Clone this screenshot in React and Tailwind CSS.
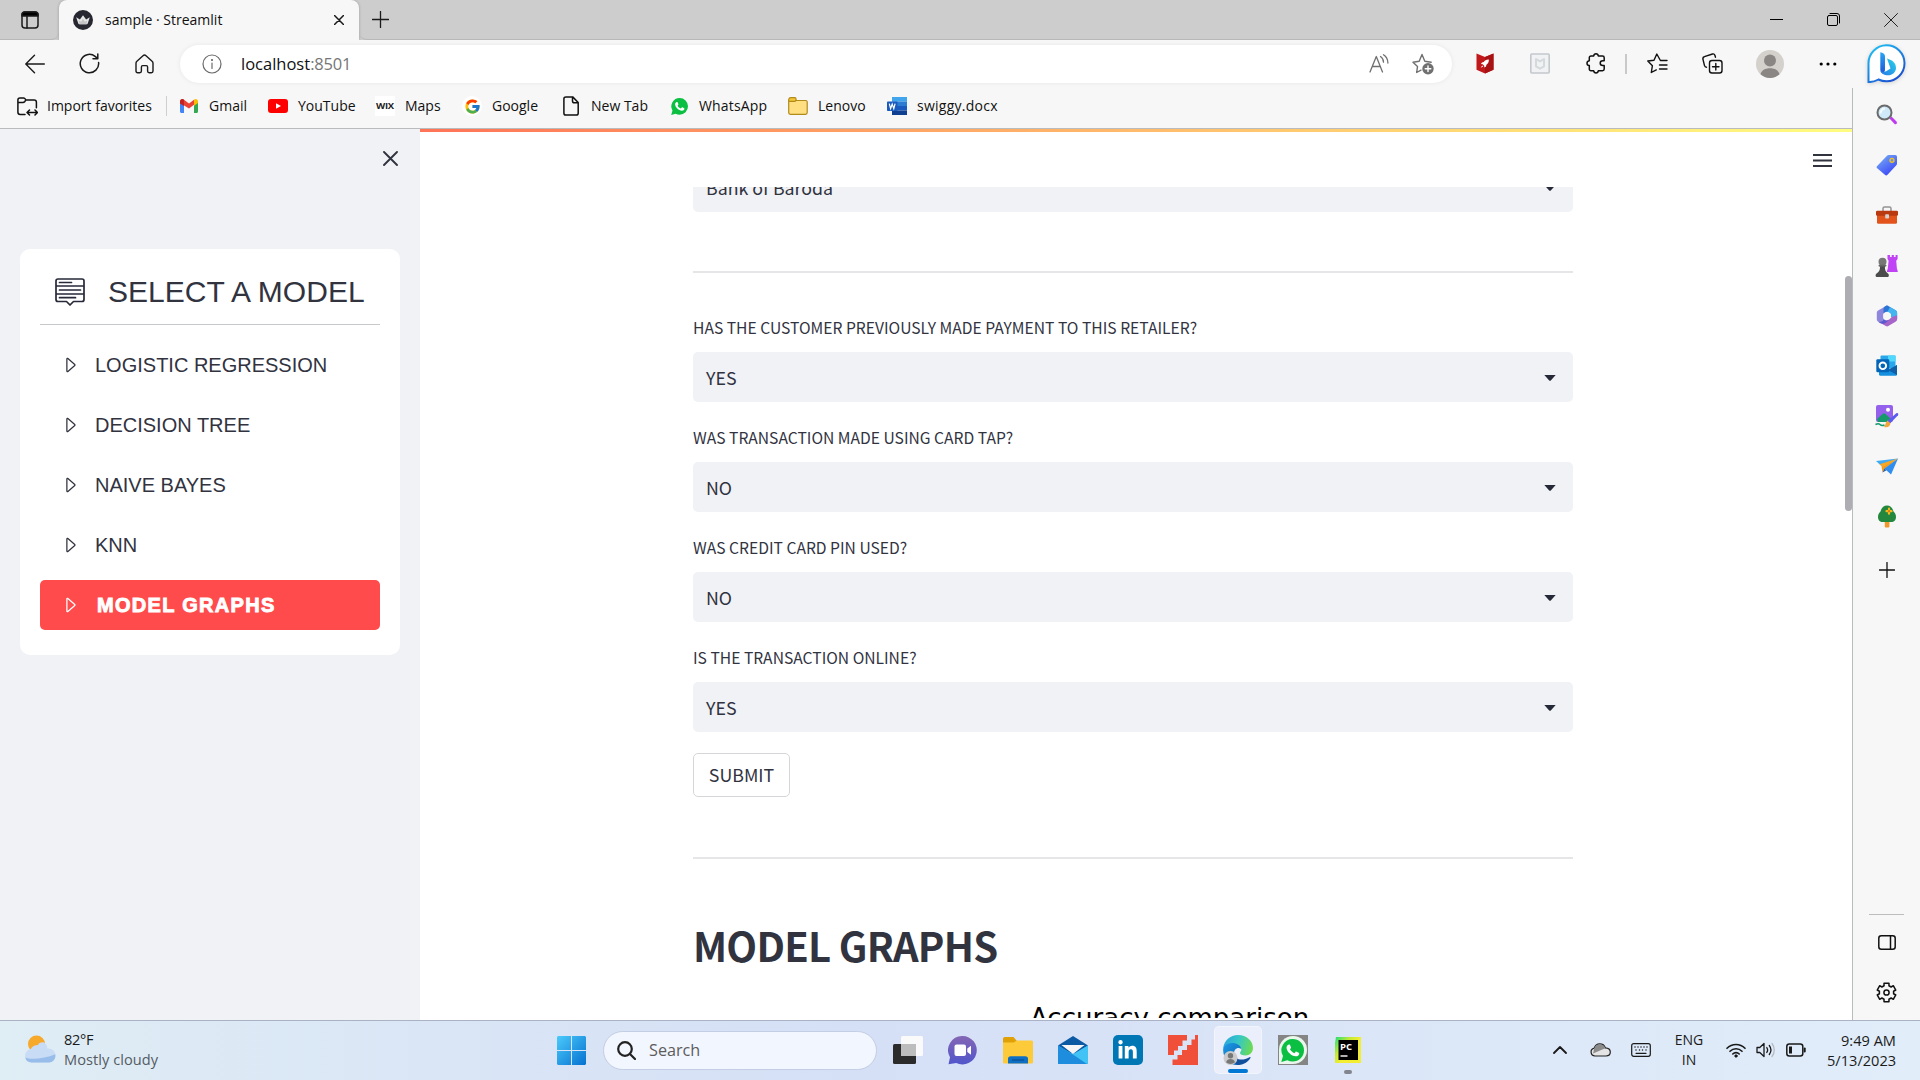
import React from "react";
import { BsCaretRight } from "react-icons/bs";
import { FcGoogle } from "react-icons/fc";
import { FaLinkedinIn } from "react-icons/fa";

const stroke = {
  fill: "none",
  stroke: "#1a1a1a",
  strokeWidth: 1.4,
  strokeLinecap: "round",
  strokeLinejoin: "round",
};

function Icon({ w = 20, h, box, className = "", children, ...rest }) {
  const height = h || w;
  return (
    <svg width={w} height={height} viewBox={box || `0 0 ${w} ${height}`} className={`block shrink-0 ${className}`} {...rest}>
      {children}
    </svg>
  );
}

/* ---------- browser tab strip ---------- */

function TabStrip() {
  return (
    <div className="flex h-10 bg-[#cdcdcd]">
      <div className="flex w-[59px] shrink-0 items-center rounded-br-lg border-b border-[#b8b8b8] pl-[21px]">
        <Icon w={18} {...stroke} strokeWidth={1.5}>
          <rect x="1" y="1" width="16" height="16" rx="3" />
          <path d="M1 5V3.5A2.5 2.5 0 0 1 3.500 1h11A2.500 2.500 0 0 1 17 3.500V5z" fill="#000" />
          <path d="M6 5v12" />
        </Icon>
      </div>
      <div className="flex h-10 w-[300px] shrink-0 items-center rounded-t-lg bg-[#f7f7f7] pl-[14px] shadow-[0_0_3px_rgba(0,0,0,0.25)]">
        <Icon w={20}>
          <circle cx="10" cy="10" r="10" fill="#262730" />
          <path d="M3.200 7.300l3.700 2.200L10 5.200l3.100 4.300 3.700-2.200-2 6c-.2.600-.5.900-1.100.900H6.300c-.6 0-.9-.3-1.100-.9z" fill="#e6e6e6" />
          <path d="M5.600 10.500l2.500 1.200 1.900-3 1.900 3 2.500-1.200-1 3.700H6.600z" fill="#c4c4c6" />
        </Icon>
        <span className="ml-[12px] w-[229px] text-[14px] leading-5 text-[#111]">sample · Streamlit</span>
        <Icon w={10} {...stroke} strokeWidth={1.5}>
          <path d="M.5.500l9 9M9.500.500l-9 9" />
        </Icon>
      </div>
      <div className="flex flex-1 items-center rounded-bl-lg border-b border-[#b8b8b8] pl-[13px]">
        <Icon w={17} {...stroke} strokeWidth={1.3}>
          <path d="M8.500.500v16M.5 8.500h16" />
        </Icon>
        <div className="flex-1" />
        <Icon w={13} {...stroke} stroke="#000" strokeWidth={1}>
          <path d="M0 6.500h13" />
        </Icon>
        <Icon w={13} className="ml-[44px]" {...stroke} stroke="#000" strokeWidth={1}>
          <rect x=".5" y="2.500" width="10" height="10" rx="1.500" />
          <path d="M3 .5h7a2.500 2.500 0 0 1 2.500 2.500v7" />
        </Icon>
        <Icon w={14} className="mr-[22px] ml-[44px]" {...stroke} stroke="#222" strokeWidth={1}>
          <path d="M.5.500l13 13M13.500.500l-13 13" />
        </Icon>
      </div>
    </div>
  );
}

/* ---------- address toolbar ---------- */

function Toolbar() {
  return (
    <div className="flex h-12 items-center bg-[#f7f7f7] pb-px pl-[25px]">
      <Icon w={20} {...stroke}>
        <path d="M19.300 10H1M9.500 1.300L.8 10l8.700 8.700" />
      </Icon>
      <Icon w={21} className="ml-[34px]" {...stroke} strokeWidth={1.5}>
        <path d="M19.600 9.500a9.200 9.200 0 1 1-3.500-6.200l2.400 2M18.800 1v4.700h-4.800" />
      </Icon>
      <Icon w={19} h={20} className="ml-[35px]" {...stroke}>
        <path d="M1 9.200c0-.9.300-1.500.9-2L8 1.700c1-.9 2-.9 3 0l6.100 5.500c.6.500.9 1.100.9 2v7.900c0 1-.6 1.600-1.600 1.600h-2.200c-1 0-1.600-.6-1.600-1.600v-4.200c0-.8-.5-1.300-1.300-1.300H7.700c-.8 0-1.300.5-1.300 1.300v4.200c0 1-.6 1.600-1.600 1.600H2.600C1.600 18.700 1 18.100 1 17.100z" />
      </Icon>
      <div className="ml-[26px] flex h-[38px] w-[1272px] shrink-0 items-center rounded-full bg-white pl-[22px] shadow-[0_0_5px_rgba(0,0,0,0.07)]">
        <Icon w={20} {...stroke} stroke="#6b6b6b" strokeWidth={1.2}>
          <circle cx="10" cy="10" r="9" />
          <path d="M10 9v5.500" />
          <circle cx="10" cy="6" r=".5" fill="#6b6b6b" />
        </Icon>
        <span className="ml-[19px] text-[16.500px] leading-6 text-[#111]">
          localhost<span className="tracking-[-0.200px] text-[#767676]">:8501</span>
        </span>
        <div className="flex-1" />
        <Icon w={20} {...stroke} stroke="#707070" strokeWidth={1.300}>
          <path d="M1 18L7.300 2.500 13.500 18M3.200 12.500h8.200M11.500 2.500c2 1.300 3 3.300 3 5.700M14.500.800c3 1.900 4.300 4.600 4.400 8.200" />
        </Icon>
        <Icon w={22} className="mr-[18px] ml-[23px]" {...stroke} stroke="#707070" strokeWidth={1.400}>
          <path d="M9 17.200l-4.300 2.300.8-5.900L1 9.200l6.200-1L10 1.500l2.800 6.700 6.400 1" />
          <circle cx="16" cy="15.800" r="5.700" fill="#707070" stroke="none" />
          <path d="M16 13v5.600M13.200 15.800h5.600" stroke="#fff" />
        </Icon>
      </div>
      <Icon w={18} h={21} className="ml-[24px]">
        <path d="M.5.500L9 4l8.500-3.500v16.300L9 20.500.500 16.800z" fill="#c0181b" />
        <path d="M9 4l8.500-3.500v16.300L9 20.500z" fill="#a81215" />
        <path d="M12.800 6.500c-2.400-.2-4 .8-5.100 2.600l-1.700.4-1.100 1.600 1.800.2 1.500 1.500.2 1.800 1.600-1.100.4-1.800c1.800-1.200 2.600-2.800 2.400-5.200zM6.200 12.500l-1.500 2.300L7.200 13.500z" fill="#fff" />
      </Icon>
      <Icon w={20} h={21} className="ml-[36px]" {...stroke} stroke="#c3c8cd">
        <rect x=".8" y="1" width="18.400" height="19" rx="1" fill="#f0f2f3" strokeWidth="1.600" />
        <path d="M6 6v7.300l4 2.300 4-2.300V6l-4 2.300z" stroke="#d5d9dc" strokeWidth="2" />
      </Icon>
      <Icon w={20} h={21} className="ml-[36px]" {...stroke} stroke="#111" strokeWidth={1.500}>
        <path d="M5 3h2.700c.2-1.400 1-2.200 2.300-2.200S12.100 1.600 12.300 3H16.500c1 0 1.700.7 1.700 1.700v3h-1.400c-1.600 0-2.600 1-2.600 2.400s1 2.500 2.600 2.500h1.400v3.500c0 1-.7 1.700-1.700 1.700h-4.200c-.2 1.300-1 2.100-2.300 2.100s-2.100-.8-2.300-2.100H5c-1 0-1.700-.7-1.700-1.700v-3.500C1.800 12.400 1 11.500 1 10.200S1.800 8 3.300 7.700v-3C3.300 3.700 4 3 5 3z" />
      </Icon>
      <div className="ml-[19px] h-5 w-[2px] bg-[#c9c9c9]" />
      <Icon w={21} className="ml-[20px]" {...stroke} stroke="#111" strokeWidth={1.400}>
        <path d="M20 7.500h-6.600L9.800 1 7 7.200.800 8l4.600 4.700-1.100 6.800 5-2.600M12.500 12h7.500M12.500 16h7.500" />
      </Icon>
      <Icon w={21} className="ml-[34px]" {...stroke} stroke="#111" strokeWidth={1.400}>
        <rect x="7.500" y="7.500" width="12.500" height="12.500" rx="2.500" />
        <path d="M13.800 10.500v6.500M10.500 13.800H17M4.500 14.200c-1 0-1.700-.6-2-1.600L.9 6c-.2-1.200.3-2 1.500-2.300L10.500 1c1.200-.3 2 .1 2.400 1.200l.6 2" />
      </Icon>
      <Icon w={28} className="ml-[33px]">
        <circle cx="14" cy="14" r="14" fill="#d4d0cb" />
        <circle cx="14" cy="10.500" r="6" fill="#8a8684" />
        <path d="M4.500 24.300c1.200-4 4.500-6 9.500-6s8.300 2 9.500 6A14 14 0 0 1 14 28a14 14 0 0 1-9.500-3.700z" fill="#8a8684" />
      </Icon>
      <Icon w={18} h={4} className="ml-[35px]">
        <circle cx="2.200" cy="2" r="1.600" />
        <circle cx="9" cy="2" r="1.600" />
        <circle cx="15.800" cy="2" r="1.600" />
      </Icon>
      <Icon w={39} className="ml-[30px] drop-shadow-sm">
        <defs>
          <linearGradient id="bingRing" x1="0" y1="0" x2=".7" y2="1">
            <stop offset="0" stopColor="#21c8f6" />
            <stop offset="1" stopColor="#1b4fd0" />
          </linearGradient>
          <linearGradient id="bingB" x1="0" y1="0" x2="0" y2="1">
            <stop offset="0" stopColor="#2aa6f5" />
            <stop offset="1" stopColor="#1c55d6" />
          </linearGradient>
          <linearGradient id="bingB2" x1="1" y1="0" x2="0" y2="1">
            <stop offset="0" stopColor="#27d3e8" />
            <stop offset="1" stopColor="#2878e8" />
          </linearGradient>
        </defs>
        <path d="M1.500 38V19.500A18 18 0 1 1 19.500 37.300a18 18 0 0 1-8-1.800C8.500 37.300 5.500 38.200 1.500 38z" fill="#fff" stroke="url(#bingRing)" strokeWidth="2" />
        <path d="M13.300 8.200c2.500.5 4.700 1.500 4.700 4v14l-1.500 3.500c-2-.5-3.200-2-3.200-4.500z" fill="url(#bingB)" />
        <path d="M20 14.500c5.500 1.500 9 4.500 9 9.500 0 4-3.500 7.300-8 7.300-4 0-7-1.800-7.500-4.500 1.500 1.800 4.500 1.200 6.500 0l3.500-2.300z" fill="url(#bingB2)" />
      </Icon>
    </div>
  );
}

/* ---------- favourites bar ---------- */

function WhatsAppMark({ size }) {
  return (
    <svg width={size} height={size} viewBox="0 0 24 24" className="block shrink-0">
      <path d="M12.200 0A11.800 11.800 0 0 1 12.200 23.600c-2 0-3.900-.5-5.600-1.400L.3 24l1.800-6.200A11.800 11.800 0 0 1 12.200 0z" fill="#0bbf42" />
      <path
        d="M8.300 5.800c.4-.1.900 0 1.100.5l1 2.300c.2.400.1.700-.2 1.100l-.9 1.100c1.100 1.900 2.600 3.200 4.700 4.100l1.100-1.400c.3-.4.600-.5 1.100-.3l2.300 1.100c.4.200.6.500.5 1-.3 2-2 2.900-3.700 2.800-4.600-.6-8.600-4.300-9.500-8.500-.2-1.700.9-3.600 2.500-3.800z"
        fill="#fff"
      />
    </svg>
  );
}

const bookmarks = [
  {
    name: "Gmail",
    width: "w-[89px]",
    icon: (
      <Icon w={18} h={14}>
        <path d="M0 2.500v10c0 .8.600 1.500 1.500 1.500H4V5.500z" fill="#4285f4" />
        <path d="M18 2.500v10c0 .8-.6 1.500-1.500 1.500H14V5.500z" fill="#34a853" />
        <path d="M0 2.600C0 .400 2.300-.6 4 .700l5 3.800 5-3.800v5L9 9.500 0 3.900z" fill="#ea4335" />
        <path d="M14 .7c1.700-1.300 4-.3 4 1.900v1.300l-4 2.800z" fill="#fbbc04" />
        <path d="M0 2.600v1.900l4 2.500V.700C2.300-.6 0 .400 0 2.600z" fill="#c5221f" />
      </Icon>
    ),
  },
  {
    name: "YouTube",
    width: "w-[107px]",
    icon: (
      <Icon w={20} h={14}>
        <rect width="20" height="14" rx="3" fill="#f00" />
        <path d="M8 4.200v5.600L13 7z" fill="#fff" />
      </Icon>
    ),
  },
  {
    name: "Maps",
    width: "w-[87px]",
    icon: (
      <span className="flex size-5 items-center justify-center bg-white font-['Open_Sans',sans-serif] text-[9.500px] font-bold tracking-[-0.300px] text-[#222]">
        WIX
      </span>
    ),
  },
  {
    name: "Google",
    width: "w-[99px]",
    icon: (
      <span className="flex size-5 items-center justify-center rounded-full bg-white">
        <FcGoogle size={17} />
      </span>
    ),
  },
  {
    name: "New Tab",
    width: "w-[108px]",
    icon: (
      <Icon w={16} h={20} {...stroke} stroke="#111" strokeWidth={1.500}>
        <path d="M3 .9h6.700L15.200 6.500v10.800c0 1.100-.8 1.800-1.900 1.800H2.800c-1.100 0-1.900-.7-1.900-1.800V2.700C.9 1.600 1.800.900 3 .9zM9.500 1v3.900c0 1.100.7 1.800 1.800 1.800h3.700" />
      </Icon>
    ),
  },
  { name: "WhatsApp", width: "w-[119px]", tracking: "tracking-[0.150px]", icon: <WhatsAppMark size={17} /> },
  {
    name: "Lenovo",
    width: "w-[99px]",
    icon: (
      <Icon w={20} h={18} stroke="#b18a1c" strokeWidth="1.200">
        <path d="M.7 3.500h17c.9 0 1.500.6 1.500 1.600v10.500c0 1-.6 1.700-1.600 1.700H2.300c-1 0-1.600-.7-1.600-1.700z" fill="#ffdf81" />
        <path d="M.7 3.200C.700 1.500 1.400.700 2.700.700h4c1 0 1.400.5 1.400 1.700s-.6 2-1.700 2H2C1.200 4.400.7 4 .7 3.200z" fill="#f5c633" />
      </Icon>
    ),
  },
  {
    name: "swiggy.docx",
    width: "w-[120px]",
    tracking: "tracking-[0.250px]",
    icon: (
      <Icon w={20} h={18}>
        <path d="M5 0h15v4.500H5z" fill="#41a5ee" />
        <path d="M5 4.500h15V9H5z" fill="#2b7cd3" />
        <path d="M5 9h15v4.500H5z" fill="#185abd" />
        <path d="M5 13.500h15V18H5z" fill="#103f91" />
        <rect y="4.500" width="10.500" height="9.500" rx=".8" fill="#185abd" />
        <path d="M2.300 6.700l1.300 5L5.200 7l1.600 4.700 1.300-5" fill="none" stroke="#fff" strokeWidth="1.200" />
      </Icon>
    ),
  },
];

function FavouritesBar() {
  return (
    <div className="flex h-[41px] items-center border-b border-[#b9bbbc] bg-[#f7f7f7] pb-[4px] pl-[17px] text-[14px] leading-5 text-[#111]">
      <div className="flex w-[149px] shrink-0 items-center">
        <Icon w={21} h={19} {...stroke} stroke="#111" strokeWidth={1.500}>
          <path d="M8 17.500H3.200c-1.400 0-2.300-.8-2.300-2.200V3c0-1.300.7-2.100 2-2.100h3.500c.7 0 1.100.2 1.500.7l1.200 1.500h8c1.400 0 2.300.8 2.300 2.200v5.500M1 5.500h4.800c1 0 1.500-.3 2-1l.8-1.200M10.500 15.500h9.500M12.500 13l-2.500 2.500 2.500 2.500M18 13l2.500 2.500L18 18" />
        </Icon>
        <span className="ml-[9px]">Import favorites</span>
      </div>
      <div className="mr-[12px] h-5 w-px bg-[#cfcfcf]" />
      {bookmarks.map((b) => (
        <div key={b.name} className={`flex shrink-0 items-center ${b.width}`}>
          <span className="flex w-5 justify-center">{b.icon}</span>
          <span className={`ml-[10px] whitespace-nowrap ${b.tracking || ""}`}>{b.name}</span>
        </div>
      ))}
    </div>
  );
}

/* ---------- Streamlit page ---------- */

const models = ["LOGISTIC REGRESSION", "DECISION TREE", "NAIVE BAYES", "KNN"];

function ModelSidebar() {
  return (
    <aside className="flex w-[420px] shrink-0 flex-col bg-[#f0f2f6] px-5 font-['Liberation_Sans',Arial,sans-serif]">
      <div className="mt-[22px] mb-[83px] mr-[2px] flex justify-end">
        <Icon w={15} {...stroke} stroke="#31333f" strokeWidth={1.900}>
          <path d="M1 1l13 13M14 1L1 14" />
        </Icon>
      </div>
      <div className="h-[406px] rounded-[10px] bg-white px-5 text-[#31333f]">
        <div className="flex h-[76px] items-center border-b border-[#c8c9cb] pt-[10px] pl-[15px]">
          <Icon w={30} h={28} {...stroke} stroke="#262938" strokeWidth={1.700}>
            <path d="M3 1h24c1.200 0 2 .8 2 2v18.500c0 1.200-.8 2-2 2h-8.500L15 27l-3.500-3.500H3c-1.200 0-2-.8-2-2V3c0-1.200.8-2 2-2zM1 8h28M1 16h28M4.500 4.500h12M4.500 12h21M4.500 19.700h16" />
          </Icon>
          <h1 className="ml-[23px] whitespace-nowrap text-[30px] leading-9 tracking-[0.030px]">SELECT A MODEL</h1>
        </div>
        <nav className="flex flex-col gap-[10px] pt-[15px]">
          {models.map((m) => (
            <div key={m} className="flex h-[50px] items-center pl-[20px] text-[20px]">
              <BsCaretRight size={20} className="mr-[15px]" />
              {m}
            </div>
          ))}
          <div className="flex h-[50px] items-center rounded-[5px] bg-[#ff4b4b] pl-[20px] text-[20px] font-bold tracking-[1.300px] text-white">
            <BsCaretRight size={20} className="mr-[17px]" />
            <span className="[-webkit-text-stroke:0.900px_white]">MODEL GRAPHS</span>
          </div>
        </nav>
      </div>
    </aside>
  );
}

const fields = [
  ["HAS THE CUSTOMER PREVIOUSLY MADE PAYMENT TO THIS RETAILER?", "YES"],
  ["WAS TRANSACTION MADE USING CARD TAP?", "NO"],
  ["WAS CREDIT CARD PIN USED?", "NO"],
  ["IS THE TRANSACTION ONLINE?", "YES"],
];

function SelectBox({ value }) {
  return (
    <div className="flex h-[50px] shrink-0 items-center justify-between rounded-[5px] bg-[#f0f2f6] pr-[17px] pl-[13px] text-[17.800px] leading-6">
      <span>{value}</span>
      <Icon w={12} h={6} className="mt-[2px]">
        <path d="M.3 0h11.400L7 5.300c-.6.700-1.400.7-2 0z" fill="#262938" />
      </Icon>
    </div>
  );
}

function Content() {
  return (
    <main className="relative flex flex-1 flex-col bg-white">
      <div className="h-[3px] shrink-0 bg-linear-to-r from-[#ff7357] to-[#fffd80]" />
      <div className="flex h-[55px] shrink-0 justify-end pt-[22px] pr-[20px]">
        <Icon w={19} h={13}>
          <path d="M0 0h19v2H0zM0 5.500h19v2H0zM0 11h19v2H0z" fill="#31333f" />
        </Icon>
      </div>
      <div className="ml-[273px] flex h-[831px] w-[880px] flex-col overflow-hidden font-['Noto_Sans_CJK_SC',sans-serif] text-[#31333f]">
        <div className="-mt-[25px]">
          <SelectBox value="Bank of Baroda" />
        </div>
        <hr className="mt-[59px] shrink-0 border-t-2 border-[#e6e6e9]" />
        <div className="mt-[43px] flex flex-col gap-[24px]">
          {fields.map(([label, value]) => (
            <div key={label} className="flex flex-col">
              <label className="h-[36px] text-[15.650px] leading-[23px]">{label}</label>
              <SelectBox value={value} />
            </div>
          ))}
        </div>
        <button className="mt-[21px] flex h-[44px] w-[97px] shrink-0 items-center justify-center rounded-[5px] border border-[#d6d6d9] pb-[2px] text-[17.800px]">
          SUBMIT
        </button>
        <hr className="mt-[60px] shrink-0 border-t-2 border-[#e6e6e9]" />
        <h2 className="mt-[56px] text-[40px] leading-[60px] font-bold tracking-[-0.750px]">MODEL GRAPHS</h2>
        <div className="mt-[23px] ml-[337px] whitespace-nowrap font-['DejaVu_Sans',sans-serif] text-[26.050px] leading-[40px] text-black">
          Accuracy comparison
        </div>
      </div>
      <div className="absolute top-[147px] right-0 h-[235px] w-[7px] rounded-full bg-[#adadb3]" />
    </main>
  );
}

/* ---------- Edge side rail ---------- */

const railIcons = [
  <Icon key="search" w={22}>
    <path d="M13.500 14.500l2-2 5 5c.8.800.6 3.300-1.700 2.800z" fill="#c03bf0" />
    <circle cx="8.500" cy="8.500" r="7" fill="#cfe9fa" stroke="#6b6b6b" strokeWidth="2" />
    <path d="M4.500 9.500c.3-3 2-4.700 4.500-5" fill="none" stroke="#f4fbff" strokeWidth="2" />
  </Icon>,
  <Icon key="tag" w={22}>
    <defs>
      <linearGradient id="tagFill" x1="0" y1="0" x2=".7" y2="1">
        <stop offset="0" stopColor="#7cb5f5" />
        <stop offset="1" stopColor="#3a45f7" />
      </linearGradient>
    </defs>
    <path d="M1.200 12L11 1.800c.5-.6 1-.8 1.700-.8H19c1.400 0 2 .7 2 2v6.500c0 .7-.2 1.200-.7 1.800L11.500 20.800c-.9.900-1.700.9-2.600 0l-7.700-6.500c-.8-.8-.8-1.500 0-2.300z" fill="url(#tagFill)" />
    <circle cx="16" cy="6.300" r="2" fill="#6b8ff5" stroke="#f5c518" strokeWidth="1.300" />
  </Icon>,
  <Icon key="tools" w={22} h={18}>
    <path d="M7 5V2.500C7 1.500 7.600 1 8.500 1h5c.9 0 1.500.5 1.500 1.500V5" fill="none" stroke="#949494" strokeWidth="1.500" />
    <path d="M1 8h20v8.500c0 .8-.5 1.200-1.300 1.200H2.300C1.500 17.700 1 17.300 1 16.500z" fill="#e2541c" />
    <rect y="4.800" width="22" height="5" rx="1.200" fill="#b93a10" />
    <rect x="9.200" y="8.300" width="3.800" height="4.200" rx=".8" fill="#d3d3d3" />
  </Icon>,
  <Icon key="games" w={23} h={22}>
    <path d="M13 0h2v2h1.700V0h2.200v2h1.700V0h2v4l-1.400 1.800.7 7.700.8 2.500v1H12v-1l.8-2.500.8-7.700L12.500 4V0z" fill="#c044f5" />
    <circle cx="7.500" cy="6.700" r="4" fill="#777" />
    <path d="M4.300 10.300h6.400l-.8 2c0 2.500.6 4.500 3.300 6.500.9.700.9 3.200-.2 3.200H1.500C.300 22 .300 19.500 1.300 18.800 4.300 16.800 5 14.800 5 12.300z" fill="#4c4c4c" />
    <rect x="3.500" y="9.700" width="8" height="1.800" rx=".9" fill="#666" />
  </Icon>,
  <Icon key="m365" w={22}>
    <path d="M11 0.500L2.500 5.200C1.500 5.800.8 6.600.8 7.800v6.400c0 1.200.5 2 1.500 2.600l2 1.200 3.200-4V8.500L13 5z" fill="#8f86de" />
    <path d="M9.800.900c.9-.5 1.600-.5 2.500 0l7.200 4.300c1 .6 1.600 1.400 1.600 2.600V14l-6-2V8.800L11 6.500 7.500 8.500V4.500C7.500 2.500 8.300 1.600 9.800.9z" fill="#2c74d6" />
    <path d="M14 2l5.500 3.200c1 .6 1.600 1.400 1.600 2.600V14l-6-2V8.800L11.500 6.700z" fill="#42b4ef" />
    <path d="M21.100 10.500v3.700c0 1.200-.6 2-1.600 2.600l-7.200 4.300c-.9.500-1.600.5-2.500 0L2.300 16.800c2.500 1.300 5 .5 6.700-.6l6.200-3.800c2.500-1.500 5-1.900 5.900-1.900z" fill="#a865c9" />
    <path d="M2.300 16.800c2.500.7 4-.8 5.200-2.800l3.500 2 4-2.300L9 18.200c-2.200 1-4.700.6-6.700-1.400z" fill="#5b5bcf" />
    <circle cx="11" cy="11" r="3.900" fill="#f7f7f7" />
  </Icon>,
  <Icon key="outlook" w={22}>
    <rect x="4.500" y=".5" width="15" height="13" rx="1" fill="#28a8ea" />
    <path d="M12 .5h7.500v6H12z" fill="#50d9ff" />
    <path d="M3 10l9 5 9-5v9.500c0 .8-.4 1.200-1.200 1.200H4.200c-.8 0-1.200-.4-1.200-1.200z" fill="#1490df" />
    <path d="M21 10v10L12 15z" fill="#0f5fa8" />
    <rect x=".3" y="4.300" width="13" height="13" rx="1.200" fill="#0364b8" />
    <circle cx="6.800" cy="10.800" r="3.300" fill="none" stroke="#fff" strokeWidth="1.900" />
  </Icon>,
  <Icon key="designer" w={24} h={23}>
    <rect x="1" width="17" height="17" rx="2" fill="#9560ec" />
    <circle cx="13" cy="4.800" r="2" fill="#fff" />
    <path d="M2 14l5.500-5c1-.9 2-.9 3 0l5 4.500-4 3.500H3z" fill="#159a6c" />
    <path d="M.5 19.500c2-1 3.500-1 4.500 0s2.500 1.500 4.500.5" fill="none" stroke="#159a6c" strokeWidth="1.500" />
    <path d="M21 8.500c1.500-1.200 3 .2 2 1.700L15 18.500 12.500 16z" fill="#5b5bf0" />
    <path d="M12.500 15.500l2.800 2.800c0 3-2.800 4.700-6.300 3.700 1.500-1 1-4 3.500-6.500z" fill="#f2a63a" />
  </Icon>,
  <Icon key="drop" w={22} h={17}>
    <path d="M0 3L22 .500 5.500 8z" fill="#3fa9f2" />
    <path d="M22 .5L5.500 8l1 6.500 2.500-4z" fill="#f39a1b" />
    <path d="M3.500 6.200L22 .500 7 9z" fill="#f7a724" />
    <path d="M22 .5L8.500 10.500l6.500 6z" fill="#2f8df0" />
    <path d="M8.500 10.500L6.500 14.500l4-2.300z" fill="#1e5fb8" />
  </Icon>,
  <Icon key="tree" w={20} h={23}>
    <rect x="7.800" y="15" width="4.600" height="7.500" rx="1" fill="#f0982a" />
    <path d="M10 .500c3.500 0 5.800 2.700 6.500 6C18.300 8 19 10 19 12c0 3-2 5-4.700 5H5.700C3 17 1 15 1 12c0-2 .7-4 2.500-5.500C4.200 3.200 6.500.500 10 .5z" fill="#23883e" />
    <path d="M12 3.700v5M9.500 6.200h5" stroke="#f5b81b" strokeWidth="2.200" strokeLinecap="round" />
    <circle cx="12" cy="6.200" r="1.100" fill="#d9791b" />
  </Icon>,
];

function gearPath(cx, cy) {
  const points = [];
  for (let i = 0; i < 6; i++) {
    [
      [-20, 7.2],
      [-15, 9.6],
      [15, 9.6],
      [20, 7.2],
    ].forEach(([d, r]) => {
      const a = ((i * 60 - 90 + d) * Math.PI) / 180;
      points.push(`${(cx + r * Math.cos(a)).toFixed(2)},${(cy + r * Math.sin(a)).toFixed(2)}`);
    });
  }
  return `M${points.join("L")}Z`;
}

function SideRail() {
  return (
    <aside className="flex w-[68px] shrink-0 flex-col items-center border-l border-[#b9bbbc] bg-[#f7f7f7]">
      <div className="mt-[2px] flex flex-col">
        {railIcons.map((icon) => (
          <div key={icon.key} className="flex h-[50.200px] items-center justify-center">
            {icon}
          </div>
        ))}
      </div>
      <Icon w={16} className="mt-[20px]" {...stroke} stroke="#111" strokeWidth={1.300}>
        <path d="M8 .5v15M.5 8h15" />
      </Icon>
      <div className="flex-1" />
      <div className="h-px w-[35px] bg-[#bdbdbd]" />
      <Icon w={18} h={15} className="mt-[20px]" {...stroke} stroke="#111" strokeWidth={1.500}>
        <rect x=".8" y=".8" width="16.400" height="13.400" rx="2.500" />
        <path d="M12.500 1v13" />
      </Icon>
      <Icon w={21} className="mt-[32px] mb-[17px]" {...stroke} stroke="#111" strokeWidth={1.500}>
        <path d={gearPath(10.5, 10.5)} />
        <circle cx="10.500" cy="10.500" r="2.600" />
      </Icon>
    </aside>
  );
}

/* ---------- Windows taskbar ---------- */

const apps = [
  <Icon key="taskview" w={30} h={28}>
    <rect y="8" width="23" height="20" rx="1.500" fill="#2b2b2b" />
    <rect x="8" width="22" height="20" rx="1.500" fill="#fafafa" />
    <path d="M8 8h15v12H8z" fill="#bdbdbd" />
  </Icon>,
  <Icon key="chat" w={29}>
    <defs>
      <linearGradient id="chatFill" x1="0" y1="0" x2="0" y2="1">
        <stop offset="0" stopColor="#8566b4" />
        <stop offset="1" stopColor="#5156cc" />
      </linearGradient>
    </defs>
    <path d="M14.500 0a14.200 14.200 0 1 1-6.300 26.900L.5 28.300l1.500-7A14.200 14.200 0 0 1 14.500 0z" fill="url(#chatFill)" />
    <rect x="6.500" y="8.500" width="11.500" height="11.500" rx="2" fill="#fff" />
    <path d="M19.300 12.500l3.700-2.700v9l-3.700-2.700z" fill="#fff" />
  </Icon>,
  <Icon key="explorer" w={30} h={27}>
    <path d="M0 2C0 .700.700 0 2 0h8.500l3 3.500V8H0z" fill="#e0a106" />
    <path d="M0 5.500h11l2.500-2H28.500c1 0 1.500.6 1.500 1.500v20c0 1-.5 1.500-1.500 1.500h-27C.500 26.500 0 26 0 25z" fill="#fdcb3a" />
    <path d="M5 26.500V22c0-1.800 1-2.700 2.700-2.700h14.600C24 19.300 25 20.200 25 22v4.500z" fill="#0f6fc5" />
    <path d="M9 23h12" stroke="#0a4f91" strokeWidth="1.300" />
  </Icon>,
  <Icon key="mail" w={30} h={28}>
    <path d="M0 9.500L15 0l15 9.500-8 8H8z" fill="#0c59a4" />
    <path d="M3.500 9h23L15 18z" fill="#f6f6f6" />
    <path d="M0 9.500l15 8.700 15-8.700V27c0 .6-.4 1-1 1H1c-.6 0-1-.4-1-1z" fill="#28a8ea" />
    <path d="M0 9.500L29.500 28H1c-.6 0-1-.4-1-1z" fill="#1f8ddd" />
    <path d="M30 9.500L15 18.200 29 28c.6 0 1-.4 1-1z" fill="#42c3f5" />
  </Icon>,
  <span key="linkedin" className="flex size-[30px] items-center justify-center rounded-[5px] bg-[#0077b5]">
    <FaLinkedinIn size={21} color="#fff" />
  </span>,
  <Icon key="stairs" w={30}>
    <path d="M0 0h19v5.500h-4.500V11H10v4.500H6V20H0z" fill="#f0503a" />
    <path d="M30 0v30H4.500v-5.500H9.500V20H14v-5h5v-5h4.500V4.500H27V0z" fill="#f0503a" />
  </Icon>,
  <Icon key="edge" w={30}>
    <defs>
      <linearGradient id="edgeTop" x1="0" y1=".3" x2="1" y2=".5">
        <stop offset="0" stopColor="#2aa5e0" />
        <stop offset=".5" stopColor="#36c8c4" />
        <stop offset="1" stopColor="#6cdb52" />
      </linearGradient>
      <linearGradient id="edgeSwirl" x1="0" y1="0" x2="1" y2="1">
        <stop offset="0" stopColor="#1c9be8" />
        <stop offset="1" stopColor="#0c59a4" />
      </linearGradient>
    </defs>
    <path d="M.2 13.500C1 5.500 7.200 0 15 0c8.800 0 15 6 15 13 0 4.500-3.400 7.500-7.500 7.500-3.300 0-5.500-1-5.500-2.500 0-.9 1.300-1.500 1.300-3.700 0-3-3-5.500-7-5.500-5.300 0-9 2.200-11.100 4.700z" fill="url(#edgeTop)" />
    <path d="M.1 15C0 10.800 4.500 8 9.500 8c4.800 0 8.600 2.500 8.800 6-3.500-2.500-7.300 0-7.300 4.500 0 5 5 8.800 10.500 7.500-1.500 2-4 4-7.500 4C6.500 30 .3 23.800.1 15z" fill="url(#edgeSwirl)" />
    <path d="M11 18.500c0 5.500 7.500 8.500 15.500 3.700.8-.4 1.300.2.900.8C25 27 20.500 30 15 30c-4.500-2-6.500-7.500-4-11.500z" fill="#124f9c" />
    <circle cx="7.500" cy="23" r="7" fill="#cbcbcb" />
    <circle cx="7.500" cy="20.700" r="2.700" fill="#777" />
    <path d="M3 27.300c.8-2.500 2.300-3.300 4.500-3.300s3.700.8 4.500 3.300a7 7 0 0 1-9 0z" fill="#777" />
  </Icon>,
  <span key="whatsapp" className="flex size-[30px] items-center justify-center bg-[#858585]">
    <span className="flex size-[28px] items-center justify-center rounded-full rounded-bl-md bg-[#e9f7ec]">
      <WhatsAppMark size={23} />
    </span>
  </span>,
  <Icon key="pycharm" w={26}>
    <defs>
      <linearGradient id="pyFill" x1="0" y1="0" x2=".6" y2=".5">
        <stop offset="0" stopColor="#1fdd7a" />
        <stop offset=".6" stopColor="#c5ea35" />
        <stop offset="1" stopColor="#f3ee33" />
      </linearGradient>
    </defs>
    <path d="M1 0h25v26H0V6z" fill="url(#pyFill)" />
    <rect x="3.500" y="3" width="19.500" height="20" fill="#000" />
    <text x="5" y="12.500" fill="#fff" fontSize="9.500" fontWeight="700" fontFamily="Open Sans, sans-serif">
      PC
    </text>
    <path d="M5.500 19h7" stroke="#fff" strokeWidth="1.400" />
  </Icon>,
];

function AppSlot({ icon }) {
  if (icon.key === "edge") {
    return (
      <div className="flex w-[55px] justify-center">
        <div className="relative flex h-12 w-12 items-center justify-center rounded-[5px] border border-white/40 bg-[#ebeffb]">
          {icon}
          <span className="absolute bottom-0 h-[4px] w-5 rounded-full bg-[#0078d4]" />
        </div>
      </div>
    );
  }
  return (
    <div className="relative flex h-12 w-[55px] items-center justify-center">
      {icon}
      {icon.key === "pycharm" && <span className="absolute bottom-0 h-[4px] w-2 rounded-full bg-[#83868f]" />}
    </div>
  );
}

function Taskbar() {
  return (
    <footer className="flex h-[60px] items-center border-t border-[#a9b3c3] bg-linear-to-r from-[#dfedf5] via-[#d5dff6] via-45% to-[#e1edf9] pb-px text-[#1b1b1b]">
      <div className="flex w-[557px] items-center pl-[24px]">
        <Icon w={32} h={30} className="-mt-[2px]">
          <circle cx="12.500" cy="10" r="8.500" fill="#f7a92b" />
          <path d="M7.500 28.500a6.800 6.800 0 0 1-.7-13.500C8 12.500 11 11 14 11c2-4 8.500-4 9.500 3.500 4.700-.3 8 2.800 8 7 0 4.100-2.800 7-6.500 7z" fill="#c9dcf5" />
          <path d="M7.500 28.500a6.800 6.800 0 0 1-6.300-5c6 2.500 20 1 30-3.300.9 4.800-2.200 8.300-6.200 8.300z" fill="#98bdea" />
        </Icon>
        <div className="-mt-[2px] ml-[8px] text-[14.600px] leading-5">
          <div className="tracking-[-0.300px]">82°F</div>
          <div className="tracking-[0.050px] text-[#555b63]">Mostly cloudy</div>
        </div>
      </div>
      <Icon w={29}>
        <defs>
          <linearGradient id="winFill" x1="0" y1="0" x2="1" y2="1">
            <stop offset="0" stopColor="#4bcafb" />
            <stop offset="1" stopColor="#0671d0" />
          </linearGradient>
        </defs>
        <path d="M1 0h13v14H0V1zM15 0h13l1 1v13H15zM0 15h14v14H1l-1-1zM15 15h14v13l-1 1H15z" fill="url(#winFill)" />
      </Icon>
      <div className="ml-[17px] flex h-[39px] w-[274px] items-center rounded-full border border-[#c3cde3] bg-[#f2f6fe] pl-[13px]">
        <Icon w={19} fill="none" stroke="#222" strokeWidth="2.200" strokeLinecap="round">
          <circle cx="8" cy="8" r="6.800" />
          <path d="M13 13l5 5" />
        </Icon>
        <span className="ml-[13px] text-[16.200px] leading-6 text-[#5c5c5c]">Search</span>
      </div>
      <div className="ml-[3px] flex items-center">
        {apps.map((icon) => (
          <AppSlot key={icon.key} icon={icon} />
        ))}
      </div>
      <div className="flex-1" />
      <Icon w={14} h={8} {...stroke} strokeWidth={1.800}>
        <path d="M1 7l6-6 6 6" />
      </Icon>
      <Icon w={21} h={14} className="ml-[23px]" stroke="#222" strokeWidth="1.200">
        <path d="M5 13a4 4 0 0 1-.8-7.900C5 2.500 7 .800 9.800.800c2.600 0 4.700 1.500 5.500 4 3 .1 5 1.900 5 4.300S18.400 13 16 13z" fill="#e4e4e4" />
        <path d="M4.200 5.500C5 2.800 7 1.300 9.800 1.300c2.600 0 4.700 1.500 5.500 4L3 10.500z" fill="#8b8b8b" stroke="none" />
      </Icon>
      <Icon w={20} h={14} className="ml-[20px]" {...stroke} strokeWidth={1.200}>
        <rect x=".7" y=".7" width="18.600" height="12.600" rx="2" />
        <path d="M4 4h.01M7 4h.01M10 4h.01M13 4h.01M16 4h.01M5 7h.01M8.500 7h.01M11.500 7h.01M15 7h.01" strokeWidth="1.500" />
        <path d="M5 10.300h10" />
      </Icon>
      <div className="ml-[21px] w-[34px] text-center text-[14px] leading-5">
        ENG
        <br />
        IN
      </div>
      <Icon w={20} h={15} className="ml-[20px]" {...stroke} strokeWidth={1.600}>
        <path d="M1 5.300a12.700 12.700 0 0 1 18 0M4 8.300a8.500 8.500 0 0 1 12 0M6.800 11a4.500 4.500 0 0 1 6.400 0" />
        <circle cx="10" cy="13" r="1.300" fill="#1a1a1a" strokeWidth=".6" />
      </Icon>
      <Icon w={20} h={16} className="ml-[10px]" {...stroke} strokeWidth={1.300}>
        <path d="M1 5.500h2.800L8 1.500v13L3.800 10.500H1z" />
        <path d="M10.800 5.500c1 1.500 1 3.500 0 5M13.300 3.500c2 2.700 2 6.300 0 9" />
        <path d="M16 1.500c3 3.800 3 9.200 0 13" stroke="#b5bac2" />
      </Icon>
      <Icon w={20} h={14} className="ml-[10px]" {...stroke} strokeWidth={1.500}>
        <rect x=".8" y="1" width="16" height="12" rx="2.500" />
        <rect x="3" y="3.500" width="3" height="7" fill="#1a1a1a" stroke="none" />
        <path d="M18.700 5.500v3" strokeWidth="2" />
      </Icon>
      <div className="mr-[24px] ml-[21px] w-[69px] text-right text-[14.600px] leading-5">
        9:49 AM
        <br />
        5/13/2023
      </div>
    </footer>
  );
}

export default function App() {
  return (
    <div className="flex h-[1080px] w-[1920px] flex-col overflow-hidden bg-[#f7f7f7] font-['Open_Sans',sans-serif]">
      <TabStrip />
      <Toolbar />
      <div className="flex h-[932px]">
        <div className="flex w-[1852px] flex-col">
          <FavouritesBar />
          <div className="flex flex-1">
            <ModelSidebar />
            <Content />
          </div>
        </div>
        <SideRail />
      </div>
      <Taskbar />
    </div>
  );
}
